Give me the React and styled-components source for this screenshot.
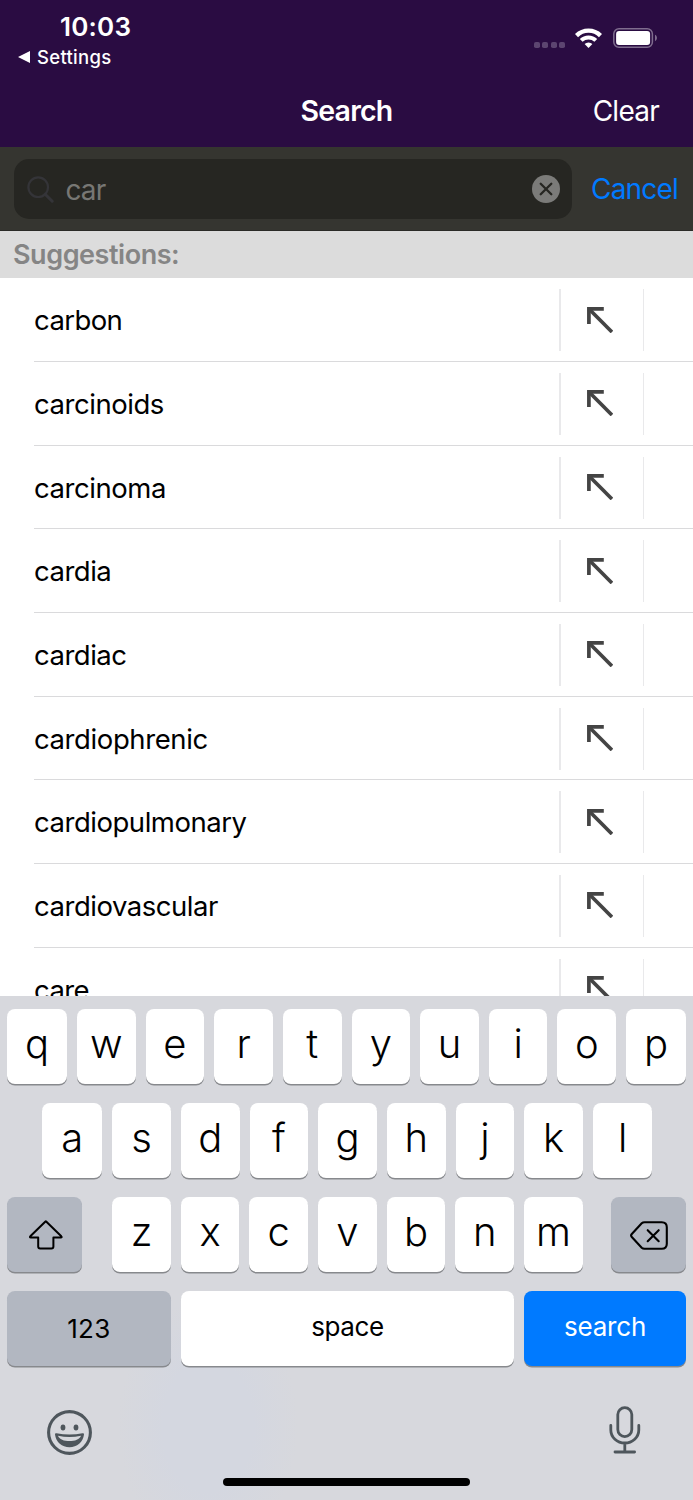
import React, { useState } from 'react'
import styled, { createGlobalStyle } from 'styled-components'

const colors = {
  header: '#2a0c42',
  searchBar: '#353530',
  field: '#262622',
  link: '#007aff',
  keyboard: '#d7d8dd',
  darkKey: '#b2b7c1',
  dock: '#4e565c',
}

const words = [
  { text: 'carbon', spacing: -0.6 },
  { text: 'carcinoids', spacing: -0.45 },
  { text: 'carcinoma', spacing: -0.45 },
  { text: 'cardia', spacing: -0.5 },
  { text: 'cardiac', spacing: -0.5 },
  { text: 'cardiophrenic', spacing: -0.4 },
  { text: 'cardiopulmonary', spacing: -0.47 },
  { text: 'cardiovascular', spacing: -0.47 },
  { text: 'care', spacing: -0.6 },
]

const GlobalStyle = createGlobalStyle`
  body {
    margin: 0;
    font-family: Inter, 'Liberation Sans', sans-serif;
  }
  * {
    box-sizing: border-box;
  }
  button {
    border: 0;
    padding: 0;
    background: none;
    font-family: inherit;
  }
  svg {
    display: block;
    flex: none;
  }
`

const Screen = styled.main`
  width: 693px;
  height: 1500px;
  display: flex;
  flex-direction: column;
  overflow: hidden;
  background: white;
`

const Header = styled.header`
  flex: none;
  height: 147px;
  background: ${colors.header};
  color: white;
`

const StatusBar = styled.div`
  height: 75px;
  display: flex;
  justify-content: space-between;
  padding: 11px 35px 0 18px;
`

const Time = styled.div`
  padding-left: 42px;
  font-size: 26px;
  line-height: 31px;
  font-weight: 600;
  letter-spacing: 0.2px;
`

const BackLink = styled.div`
  display: flex;
  align-items: center;
  gap: 7px;
  margin-top: 2px;
  font-size: 18.5px;
  line-height: 26px;
  font-weight: 500;
  letter-spacing: 0.3px;
`

const StatusIcons = styled.div`
  display: flex;
  align-items: flex-end;
  height: 37px;
`

const Dots = styled.div`
  display: flex;
  gap: 2.4px;
  margin-right: 10px;
`

const Dot = styled.span`
  width: 6px;
  height: 6px;
  border-radius: 1.8px;
  background: #5c4570;
`

const NavBar = styled.div`
  height: 71px;
  display: grid;
  grid-template-columns: 1fr auto 1fr;
  align-items: center;
  padding: 0 34px;
`

const Title = styled.h1`
  grid-column: 2;
  margin: 0;
  font-size: 28.5px;
  line-height: 35px;
  font-weight: 600;
  letter-spacing: -0.8px;
`

const ClearButton = styled.button`
  justify-self: end;
  padding-top: 2px;
  color: white;
  font-size: 28px;
  line-height: 35px;
  letter-spacing: -0.75px;
`

const SearchBar = styled.div`
  flex: none;
  height: 84px;
  display: flex;
  align-items: center;
  padding: 0 14px;
  background: ${colors.searchBar};
  border-bottom: 1px solid #2b2b27;
`

const Field = styled.label`
  flex: none;
  width: 558px;
  height: 60px;
  display: flex;
  align-items: center;
  padding: 1px 12px 0 13px;
  border-radius: 15px;
  background: ${colors.field};
`

const Input = styled.input`
  flex: 1;
  min-width: 0;
  height: 40px;
  margin: 0 0 0 11.5px;
  padding: 1px 0 0;
  border: 0;
  outline: 0;
  background: none;
  color: #777774;
  font-family: inherit;
  font-size: 28px;
  letter-spacing: -0.9px;
`

const CancelButton = styled.button`
  margin-left: 19px;
  color: ${colors.link};
  font-size: 28px;
  letter-spacing: -0.8px;
  white-space: nowrap;
`

const SectionTitle = styled.h2`
  flex: none;
  height: 47px;
  margin: 0;
  padding-left: 13px;
  background: #dcdcdc;
  color: #858585;
  font-size: 27px;
  line-height: 48px;
  font-weight: 600;
  letter-spacing: -0.45px;
`

const List = styled.ul`
  flex: 1;
  min-height: 0;
  overflow: hidden;
  margin: 0;
  padding: 0.3px 0 0 34px;
  list-style: none;
`

const Item = styled.li`
  height: 83.7px;
  display: flex;
  align-items: center;
  border-bottom: 1px solid #dadadc;
`

const Word = styled.span`
  flex: 1;
  color: black;
  font-size: 27.5px;
  line-height: 40px;
  letter-spacing: ${(props) => props.$spacing}px;
  padding-top: 1px;
`

const InsertButton = styled.button`
  width: 85px;
  height: 62px;
  margin: 1px 49px 0 0;
  padding: 0 0 1px 26px;
  border: solid #e9e9eb;
  border-width: 0 1px 0 2px;
`

const Keyboard = styled.section`
  flex: none;
  height: 504px;
  display: flex;
  flex-direction: column;
  padding: 13.3px 7px 0;
  background: radial-gradient(ellipse 90px 130px at 208px 430px, #d4d7e0 50%, transparent 100%)
    ${colors.keyboard};
`

const KeyRow = styled.div`
  display: flex;
  gap: 10px;
  height: 76px;
  margin-bottom: 17.8px;
  padding-left: ${(props) => props.$indent || 0}px;
`

const Key = styled.button`
  flex: none;
  width: ${(props) => props.$width || 58.65}px;
  height: 75px;
  display: flex;
  align-items: center;
  justify-content: center;
  padding-bottom: ${(props) => props.$lift ?? 6}px;
  margin-left: ${(props) => props.$push || 0}px;
  border-radius: 8px;
  box-shadow: 0 1.6px 0 #87898d;
  background: ${(props) => props.$background || 'white'};
  color: ${(props) => props.$color || 'black'};
  font-size: ${(props) => props.$size || 40}px;
  font-weight: ${(props) => props.$weight || 350};
  letter-spacing: ${(props) => props.$spacing || 0}px;

  svg {
    margin: 2px 0 0 2px;
  }
`

const Dock = styled.div`
  display: flex;
  justify-content: space-between;
  align-items: flex-start;
  height: 50px;
  margin-top: 22px;
  padding: 0 45px 0 40px;

  svg:first-child {
    margin-top: 3.5px;
  }
`

const HomeIndicator = styled.div`
  width: 247px;
  height: 8.6px;
  margin: 21.4px auto 0;
  border-radius: 5px;
  background: black;
`

const WifiIcon = () => (
  <svg width='27' height='20' viewBox='0 0 27 20' fill='none' stroke='white' strokeWidth='4'>
    <path d='M1.5 7.6a17 17 0 0 1 24 0' strokeWidth='4.4' />
    <path d='M6.2 12.4a10.4 10.4 0 0 1 14.6 0' strokeWidth='4' />
    <path d='M13.5 20l-3.9-4a5.6 5.6 0 0 1 7.8 0z' fill='white' stroke='none' />
  </svg>
)

const BatteryIcon = () => (
  <svg width='45' height='20' viewBox='0 0 45 20' fill='none'>
    <rect x='.8' y='.8' width='38.6' height='18.4' rx='5.2' stroke='#7f6d8e' strokeWidth='1.5' />
    <rect x='3.1' y='3.1' width='34' height='13.8' rx='3' fill='white' />
    <path d='M42 6.8c2.6 1.3 2.6 5.1 0 6.4z' fill='#7f6d8e' />
  </svg>
)

const SearchIcon = () => (
  <svg width='27' height='27' viewBox='0 0 27 27' fill='none' stroke='#343438'>
    <circle cx='11.2' cy='11.2' r='9.8' strokeWidth='2.2' />
    <path d='M18.2 18.2l7 7' strokeWidth='3' strokeLinecap='round' />
  </svg>
)

const ClearIcon = () => (
  <svg width='28' height='28' viewBox='0 0 28 28'>
    <circle cx='14' cy='14' r='14' fill='#7b7b79' />
    <path
      d='M8.7 8.7l10.6 10.6M19.3 8.7L8.7 19.3'
      stroke={colors.field}
      strokeWidth='2.3'
      strokeLinecap='round'
    />
  </svg>
)

const ArrowIcon = () => (
  <svg width='26' height='26' viewBox='0 0 26 26' fill='none' stroke='#444' strokeWidth='3.7'>
    <path d='M16.8 1.9H1.9v15' />
    <path d='M1.8 1.8L25 25' />
  </svg>
)

const ShiftIcon = () => (
  <svg width='34' height='30' viewBox='0 0 34 30' fill='none' stroke='black' strokeWidth='2'>
    <path
      d='M16.2 1.7L1.3 16.3q-1 1.1.5 1.1h7.4v9q0 2 2 2h11.2q2 0 2-2v-9h7.4q1.5 0 .5-1.1L17.4 1.7q-.6-.6-1.2 0z'
      strokeLinejoin='round'
    />
  </svg>
)

const DeleteIcon = () => (
  <svg width='38' height='29' viewBox='0 0 38 29' fill='none' stroke='black' strokeWidth='2.1'>
    <path d='M14.5 1.2h17.3q5 0 5 5v16.6q0 5-5 5H14.5q-1.6 0-2.8-1.1L1.8 16q-1.4-1.5 0-3l9.9-10.7q1.2-1.1 2.8-1.1z' />
    <path d='M17.7 9.2l11 11M28.7 9.2l-11 11' strokeLinecap='round' />
  </svg>
)

const EmojiIcon = () => (
  <svg width='45' height='45' viewBox='0 0 45 45' fill={colors.dock}>
    <circle cx='22.5' cy='22.5' r='20.9' fill='none' stroke={colors.dock} strokeWidth='3.1' />
    <ellipse cx='16' cy='17.5' rx='2.4' ry='2.9' />
    <ellipse cx='29' cy='17.5' rx='2.4' ry='2.9' />
    <path
      fillRule='evenodd'
      d='M9.5 23.2q13 2.8 26 0 1.8-.2 1.5 1.4C36 32.4 30 37.2 22.5 37.2S9 32.4 8 24.6q-.3-1.6 1.5-1.4zM11 25.7c2.2 7.2 20.8 7.2 23 0q-11.5 2.4-23 0z'
    />
  </svg>
)

const MicIcon = () => (
  <svg
    width='32'
    height='48'
    viewBox='0 0 32 48'
    fill='none'
    stroke={colors.dock}
    strokeWidth='2.8'
    strokeLinecap='round'>
    <rect x='8.8' y='1.6' width='14' height='29' rx='7' />
    <path d='M1.8 19.5v4.5a14 13 0 0 0 28 0v-4.5M15.8 37.5v8M6 46h19.6' />
  </svg>
)

function App() {
  const [query, setQuery] = useState('car')

  const type = (letter) => setQuery(query + letter)

  return (
    <Screen>
      <GlobalStyle />
      <Header>
        <StatusBar>
          <div>
            <Time>10:03</Time>
            <BackLink>
              <svg width='12' height='12' viewBox='0 0 12 12' fill='white'>
                <path d='M0 6L12 0v12z' />
              </svg>
              Settings
            </BackLink>
          </div>
          <StatusIcons>
            <Dots>
              <Dot />
              <Dot />
              <Dot />
              <Dot />
            </Dots>
            <WifiIcon />
            <span style={{ width: 11 }} />
            <BatteryIcon />
          </StatusIcons>
        </StatusBar>
        <NavBar>
          <Title>Search</Title>
          <ClearButton onClick={() => setQuery('')}>Clear</ClearButton>
        </NavBar>
      </Header>

      <SearchBar>
        <Field>
          <SearchIcon />
          <Input value={query} onChange={(e) => setQuery(e.target.value)} />
          <ClearIcon />
        </Field>
        <CancelButton>Cancel</CancelButton>
      </SearchBar>

      <SectionTitle>Suggestions:</SectionTitle>
      <List>
        {words.map((word) => (
          <Item key={word.text}>
            <Word $spacing={word.spacing}>{word.text}</Word>
            <InsertButton onClick={() => setQuery(word.text)}>
              <ArrowIcon />
            </InsertButton>
          </Item>
        ))}
      </List>

      <Keyboard>
        <KeyRow>
          {[...'qwertyuiop'].map((letter, i) => (
            <Key key={letter} $width={i === 0 ? 60 : i === 9 && 59.7} onClick={() => type(letter)}>
              {letter}
            </Key>
          ))}
        </KeyRow>
        <KeyRow $indent={35.3}>
          {[...'asdfghjkl'].map((letter, i) => (
            <Key key={letter} $width={i === 0 ? 60 : i === 8 && 59.7} onClick={() => type(letter)}>
              {letter}
            </Key>
          ))}
        </KeyRow>
        <KeyRow>
          <Key $width={75} $lift={0} $background={colors.darkKey}>
            <ShiftIcon />
          </Key>
          {[...'zxcvbnm'].map((letter, i) => (
            <Key key={letter} $push={i === 0 ? 20.2 : 0} onClick={() => type(letter)}>
              {letter}
            </Key>
          ))}
          <Key
            $width={75}
            $lift={0}
            $push={18.3}
            $background={colors.darkKey}
            onClick={() => setQuery(query.slice(0, -1))}>
            <DeleteIcon />
          </Key>
        </KeyRow>
        <KeyRow>
          <Key $width={164} $lift={0} $size={26} $weight={400} $spacing={0.4} $background={colors.darkKey}>
            123
          </Key>
          <Key $width={333} $lift={4} $size={26} $weight={400} $spacing={-0.4} onClick={() => type(' ')}>
            space
          </Key>
          <Key
            $width={162}
            $lift={4}
            $size={26}
            $weight={400}
            $spacing={-0.2}
            $background={colors.link}
            $color='white'>
            search
          </Key>
        </KeyRow>
        <Dock>
          <EmojiIcon />
          <MicIcon />
        </Dock>
        <HomeIndicator />
      </Keyboard>
    </Screen>
  )
}

export default App
